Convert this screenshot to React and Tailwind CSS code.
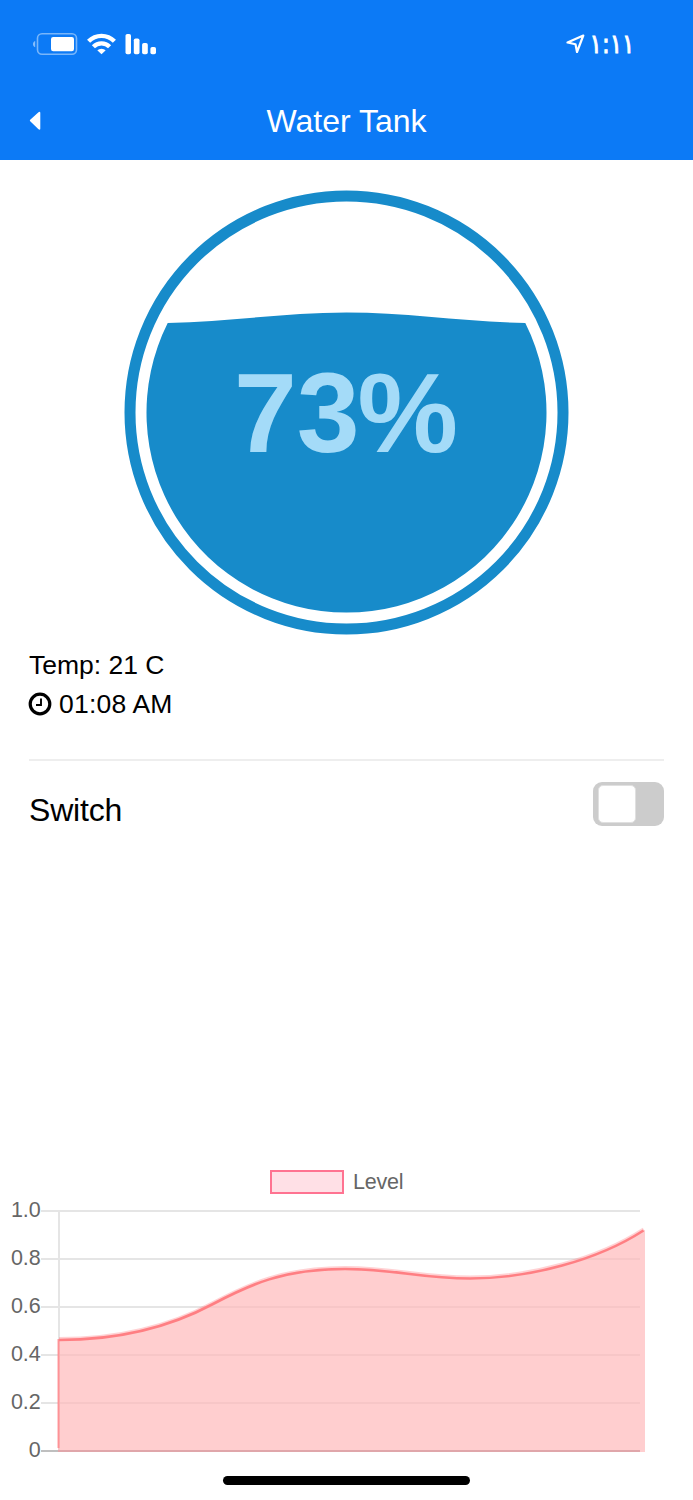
import React from "react";

const TICKS = ["1.0", "0.8", "0.6", "0.4", "0.2", "0"];

const LEVEL_CURVE =
  "M59 140 C122 140 172 126 213 104 C249 85 283 69 345 69 C395 69 420 78.5 470 78.5 C530 78.5 598 60 643.5 30.5";

function StatusBar() {
  return (
    <div className="flex h-[88px] items-start justify-between pl-8 pr-[48px] pt-[24px] text-white">
      <svg className="mt-2" width="126" height="24" viewBox="32 32 126 24" fill="currentColor">
        <path d="M35.2 41v6.2c-3-1.2-3-5 0-6.200z" opacity=".5" />
        <rect x="37.500" y="33.800" width="39" height="20.400" rx="4.500" fill="none" stroke="currentColor" strokeWidth="1.600" opacity=".45" />
        <rect x="51" y="37" width="23" height="14.200" rx="2.200" />
        <g fill="none" stroke="currentColor" strokeWidth="4.400">
          <path d="M88.600 41.200a18.200 18.200 0 0 1 25.800 0" />
          <path d="M93.400 46.700a11.500 11.500 0 0 1 16.200 0" />
        </g>
        <path d="M97.300 50.300a6.200 6.200 0 0 1 8.400 0L101.500 54.300z" />
        <rect x="125.500" y="34" width="5.500" height="20.200" rx="1.800" />
        <rect x="133.800" y="38.500" width="5.700" height="15.700" rx="1.800" />
        <rect x="142.100" y="43" width="5.700" height="11.200" rx="1.800" />
        <rect x="150.400" y="47" width="5.600" height="7.200" rx="1.800" />
      </svg>
      <svg width="79" height="40" viewBox="566 24 79 40">
        <path d="M583.300 35.500L567.500 42.500L575.500 44.300L577 52z" fill="none" stroke="currentColor" strokeWidth="2.200" strokeLinejoin="round" />
        <text x="589.500" y="53" direction="ltr" textLength="45" lengthAdjust="spacingAndGlyphs" fill="currentColor" stroke="currentColor" strokeWidth=".9" className="font-['DejaVu_Sans',sans-serif] text-[27px]">١:١١</text>
      </svg>
    </div>
  );
}

function Gauge() {
  return (
    <div className="flex h-[474px] justify-center pt-[30px]">
      <svg width="445" height="445" viewBox="0 0 445 445">
        <circle cx="222.500" cy="222.500" r="216.500" fill="none" stroke="#178bca" strokeWidth="11" />
        <path d="M43.700 133 C103 132 162 122.500 222.500 122.500 S342 132 401.300 133 A200 200 0 1 1 43.700 133Z" fill="#178bca" />
        <text x="110" y="261.500" fill="#a4dbf8" className="font-['Liberation_Sans',sans-serif] text-[113px] font-bold">73<tspan x="233.500">%</tspan></text>
      </svg>
    </div>
  );
}

function LevelChart() {
  return (
    <section className="mt-[343px]">
      <div className="flex h-[24px] items-center pl-[270px] text-[21.500px] tracking-[-0.2px] text-[#666]">
        <span className="mr-[9px] h-[24px] w-[74px] border-2 border-[#ff7391] bg-[#ffe0e6]" />
        <span className="pt-[1px]">Level</span>
      </div>
      <div className="mt-[6px] flex h-[260px]">
        <div className="-mt-[14px] w-[41px] pr-[0.500px] text-right text-[21.500px] tracking-[-0.100px] text-[#666]">
          {TICKS.map((tick) => (
            <div key={tick} className="h-12 leading-[48px]">{tick}</div>
          ))}
        </div>
        <svg width="652" height="260" viewBox="41 0 652 260">
          {[11, 59, 107, 155, 203].map((y) => (
            <path key={y} d={`M41 ${y}H640`} stroke="#e5e5e5" strokeWidth="2" />
          ))}
          <path d="M59 10V251" stroke="#e5e5e5" strokeWidth="2" />
          <path d={`${LEVEL_CURVE} L645 30V252H58V140Z`} fill="#ffb9bb" fillOpacity=".7" />
          <path d="M41 251H58" stroke="#bfbfbf" strokeWidth="2" />
          <path d="M58 251H640" stroke="#e0a6aa" strokeWidth="2" />
          <path d={LEVEL_CURVE} transform="translate(0 -1.500)" fill="none" stroke="#ff7f83" strokeOpacity=".35" strokeWidth="3" />
          <path d={LEVEL_CURVE} fill="none" stroke="#ff7f83" strokeWidth="2.600" />
          <path d="M58.500 139V248" stroke="#ff8589" strokeOpacity=".8" strokeWidth="2" />
        </svg>
      </div>
    </section>
  );
}

export default function App() {
  return (
    <main className="flex h-[1500px] w-[693px] flex-col overflow-hidden bg-white font-['Liberation_Sans',Arial,sans-serif] text-black">
      <header className="h-[160px] bg-[#0c7af6]">
        <StatusBar />
        <div className="grid h-[66px] grid-cols-[60px_1fr_60px] items-center text-white">
          <svg className="ml-[29px]" width="13" height="20" viewBox="0 0 13 20" fill="currentColor">
            <path d="M9.500 1.200 1.200 8.800a1 1 0 0 0 0 1.500L9.500 18.200q1.800 1.200 1.800-.8V2q0-2-1.800-.8z" />
          </svg>
          <h1 className="text-center text-[32px] leading-none">Water Tank</h1>
        </div>
      </header>
      <Gauge />
      <section className="px-[29px] text-[26.500px] leading-[39px]">
        <div className="mt-[12px]">Temp: 21 C</div>
        <div className="flex items-center tracking-[0.200px]">
          <svg className="-ml-[1px] -mt-[2px] mr-[7px]" width="24" height="24" viewBox="0 0 24 24" fill="none" stroke="currentColor">
            <circle cx="12" cy="12" r="9.800" strokeWidth="3.200" />
            <path d="M13 6.500v6.500H8" strokeWidth="1.900" />
          </svg>
          01:08 AM
        </div>
        <div className="mt-[35px] h-[2px] bg-[#eee]" />
        <div className="mt-[21px] flex h-[45px] items-start justify-between">
          <span className="pt-[9px] text-[32px] tracking-[-0.200px]">Switch</span>
          <div className="h-[44px] w-[71px] rounded-[9px] bg-[#ccc] pl-[5px] pt-[3px]">
            <div className="h-[38px] w-[38px] rounded-[5px] border border-[#e0e0e0] bg-white" />
          </div>
        </div>
      </section>
      <LevelChart />
      <div className="mx-auto mt-[16px] h-[9px] w-[247px] shrink-0 rounded-full bg-black" />
    </main>
  );
}
